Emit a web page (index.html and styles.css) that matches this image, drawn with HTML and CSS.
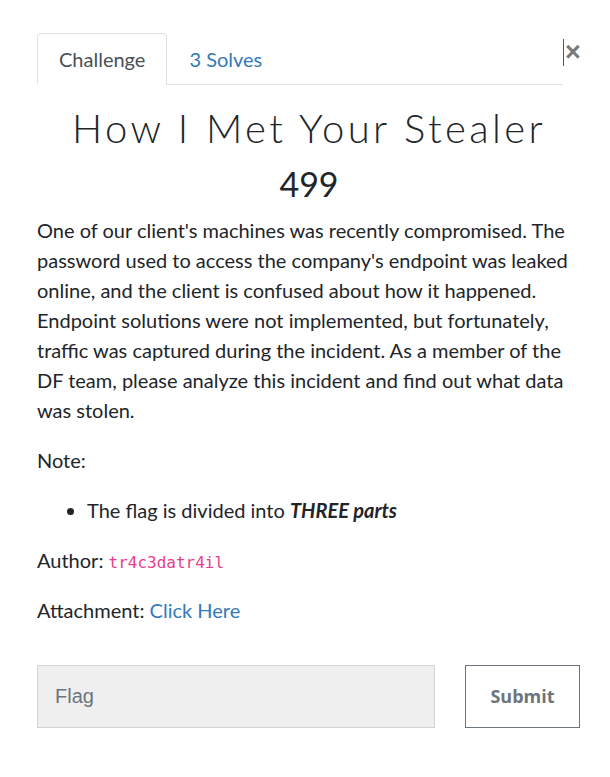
FILE: index.html
```html
<!DOCTYPE html>
<html>
<head>
<meta charset="utf-8">
<link rel="stylesheet" href="styles.css">
</head>
<body>
<div class="modal">
  <div class="header">
    <ul class="tabs">
      <li class="tab active">Challenge</li>
      <li class="tab link">3 Solves</li>
    </ul>
    <div class="close"><span class="caret"></span><span class="x">&times;</span></div>
  </div>
  <h2 class="title">How I Met Your Stealer</h2>
  <h3 class="points">499</h3>
  <div class="desc">
    <p>One of our client's machines was recently compromised. The password used to access the company's endpoint was leaked online, and the client is confused about how it happened. Endpoint solutions were not implemented, but fortunately, traffic was captured during the incident. As a member of the DF team, please analyze this incident and find out what data was stolen.</p>
    <p>Note:</p>
    <ul class="list">
      <li>The flag is divided into <em><strong>THREE parts</strong></em></li>
    </ul>
    <p>Author: <code>tr4c3datr4il</code></p>
    <p>Attachment: <a href="#">Click Here</a></p>
  </div>
  <div class="form">
    <input class="flag" type="text" placeholder="Flag">
    <button class="submit">Submit</button>
  </div>
</div>
</body>
</html>
```
FILE: styles.css
```css
html, body { margin: 0; padding: 0; background: #fff; }
body {
  font-family: Lato, "Open Sans", sans-serif;
  font-size: 20px;
  line-height: 1.5;
  color: #212529;
}
.modal {
  width: 544px;
  padding: 33px 0 0 37px;
}
.header {
  display: flex;
  align-items: flex-start;
}
.tabs {
  flex: 1;
  display: flex;
  list-style: none;
  margin: 0;
  padding: 0;
  border-bottom: 1px solid #dee2e6;
}
.tab {
  padding: 10px 21px;
  border: 1px solid transparent;
  border-top-left-radius: 4px;
  border-top-right-radius: 4px;
  margin-bottom: -1px;
}
.tab.active {
  color: #495057;
  border-color: #dee2e6 #dee2e6 #fff;
  background: #fff;
}
.tab.link { color: #337ab7; }
.close {
  width: 18px;
  display: flex;
  align-items: flex-start;
  margin-top: 6px;
  height: 30px;
}
.caret {
  width: 1px;
  height: 27px;
  background: #555;
}
.x {
  font-family: "Liberation Sans", Arial, sans-serif;
  font-weight: 700;
  font-size: 27px;
  line-height: 22px;
  color: #7a7a7a;
  margin-left: 1px;
  margin-top: 2px;
}
.title {
  margin: 19px 0 0;
  text-align: center;
  font-family: Lato, sans-serif;
  font-weight: 300;
  font-size: 40px;
  letter-spacing: 3.4px;
  line-height: 1.2;
  color: #212529;
}
.points {
  margin: 12px 0 0;
  text-align: center;
  font-weight: 400;
  font-size: 34px;
  line-height: 1.2;
  color: #212529;
}
.desc { margin-top: 10px; }
.desc p { margin: 0 0 20px; }
.list { margin: 0 0 20px; padding-left: 50px; }
code {
  font-family: "DejaVu Sans Mono", monospace;
  font-size: 16px;
  color: #e83e8c;
}
a { color: #337ab7; text-decoration: none; }
.form {
  display: flex;
  gap: 30px;
  margin-top: 40px;
}
.flag {
  width: 398px;
  height: 63px;
  box-sizing: border-box;
  background: #efefef;
  border: 1px solid #ced4da;
  padding: 0 17px;
  font-family: "Liberation Sans", Arial, sans-serif;
  font-size: 20px;
  color: #495057;
  margin: 0;
  outline: none;
}
.flag::placeholder { color: #6c757d; }
.submit {
  width: 115px;
  height: 63px;
  box-sizing: border-box;
  background: #fff;
  border: 1px solid #6c757d;
  font-family: "Open Sans", sans-serif;
  font-weight: 700;
  font-size: 18px;
  color: #6c757d;
  margin: 0;
  padding: 0;
}
```
